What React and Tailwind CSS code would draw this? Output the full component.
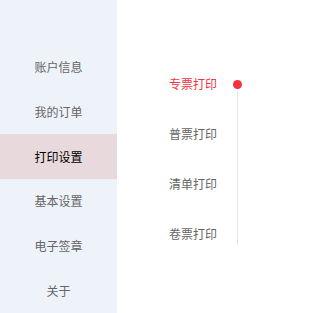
import React from 'react'

const menu = ["账户信息", "我的订单", "打印设置", "基本设置", "电子签章", "关于"]
const prints = ["专票打印", "普票打印", "清单打印", "卷票打印"]

function App() {
  const active = "打印设置"
  const current = "专票打印"

  return (
    <div className="w-[274px] h-[313px] flex bg-white overflow-hidden"
      style={{ fontFamily: '"Noto Sans CJK SC", "Noto Sans", sans-serif' }}>
      {/* left menu */}
      <div className="w-[117px] h-full bg-[#eef2f9] pt-[45px] flex flex-col">
        {menu.map(m => (
          <div key={m}
            className={"h-[45px] flex items-center justify-center text-[12px] " + (m === active ? "bg-[#e8d9dc] text-black" : "text-[#666]")}>
            {m}
          </div>
        ))}
      </div>

      {/* print types */}
      <div className="flex-1 flex pt-[59px] pl-[52px]">
        <div className="w-[48px] flex flex-col">
          {prints.map(p => (
            <div key={p}
              className={"h-[50px] flex items-center whitespace-nowrap text-[12px] " + (p === current ? "text-[#f5333f]" : "text-[#666]")}>
              {p}
            </div>
          ))}
        </div>
        <div className="ml-[20px] mt-[25px] h-[161px] w-px bg-[#e6e6e6] relative">
          <div className="absolute -left-[4px] -top-[4px] w-[9px] h-[9px] rounded-full bg-[#f5333f]"></div>
        </div>
      </div>
    </div>
  )
}

export default App
